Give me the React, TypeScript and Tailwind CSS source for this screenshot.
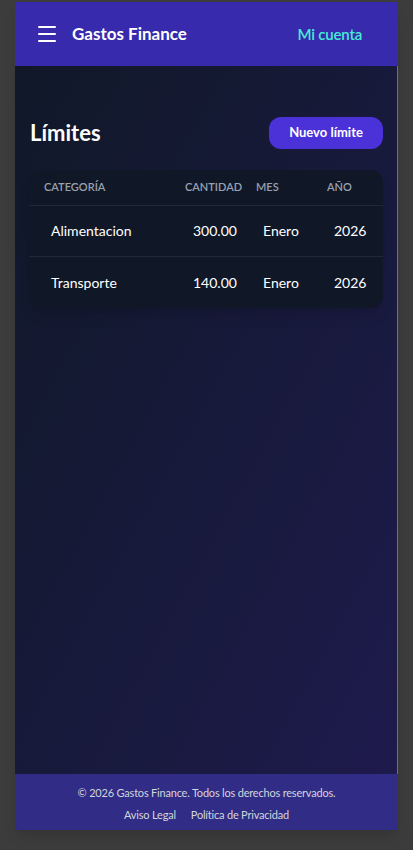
import React from 'react';
import { Menu } from 'lucide-react';

const limites = [
  { categoria: 'Alimentacion', cantidad: '300.00', mes: 'Enero', anio: '2026' },
  { categoria: 'Transporte', cantidad: '140.00', mes: 'Enero', anio: '2026' },
];

export default function App() {
  return (
    <div className="w-full h-[850px] bg-[#3c3c3c] pt-[2px] pl-[15px] font-['Lato','Liberation_Sans',sans-serif]">
      <div className="w-[383px] h-[828px] flex flex-col shadow-lg">
        {/* Navbar */}
        <header className="h-16 shrink-0 bg-indigo-800 flex items-center justify-between pl-5 pr-[36px]">
          <div className="flex items-center gap-[13px]">
            <Menu className="w-6 h-6 text-white" strokeWidth={2} />
            <span className="text-white text-[17px] font-bold">Gastos Finance</span>
          </div>
          <a className="text-teal-300 text-[15px] font-semibold tracking-[-0.2px]">Mi cuenta</a>
        </header>

        {/* Contenido */}
        <main className="flex-1 bg-gradient-to-br from-gray-900 to-indigo-950 border-r border-gray-500 px-[14px] pt-[50px]">
          <div className="flex items-center justify-between mb-[21px]">
            <h1 className="text-white text-[22px] font-bold pl-px">Límites</h1>
            <button className="w-[114px] h-8 rounded-xl bg-[#4a31d8] text-white text-[13px] font-bold">
              Nuevo límite
            </button>
          </div>

          <div className="bg-gray-900 rounded-xl shadow-lg overflow-hidden">
            <div className="flex h-9 items-center border-b border-gray-800 text-gray-400 text-[11px] font-semibold uppercase">
              <div className="w-[142px] pl-[15px]">Categoría</div>
              <div className="w-[71px] pl-[14px]">Cantidad</div>
              <div className="w-[71px] pl-[14px]">Mes</div>
              <div className="w-[70px] pl-[14px]">Año</div>
            </div>
            {limites.map((l, i) => (
              <div
                key={l.categoria}
                className={`flex h-[51px] items-center text-white text-sm ${i < limites.length - 1 ? 'border-b border-gray-800' : ''}`}
              >
                <div className="w-[142px] pl-[22px]">{l.categoria}</div>
                <div className="w-[71px] pl-[22px]">{l.cantidad}</div>
                <div className="w-[71px] pl-[21px]">{l.mes}</div>
                <div className="w-[70px] pl-[21px]">{l.anio}</div>
              </div>
            ))}
          </div>
        </main>

        {/* Footer */}
        <footer className="h-14 shrink-0 bg-indigo-900 flex flex-col items-center pt-[11px] gap-[5px] text-gray-300 text-[11px] tracking-[-0.2px]">
          <p>© 2026 Gastos Finance. Todos los derechos reservados.</p>
          <div className="flex gap-[15px]">
            <a>Aviso Legal</a>
            <a>Política de Privacidad</a>
          </div>
        </footer>
      </div>
    </div>
  );
}
